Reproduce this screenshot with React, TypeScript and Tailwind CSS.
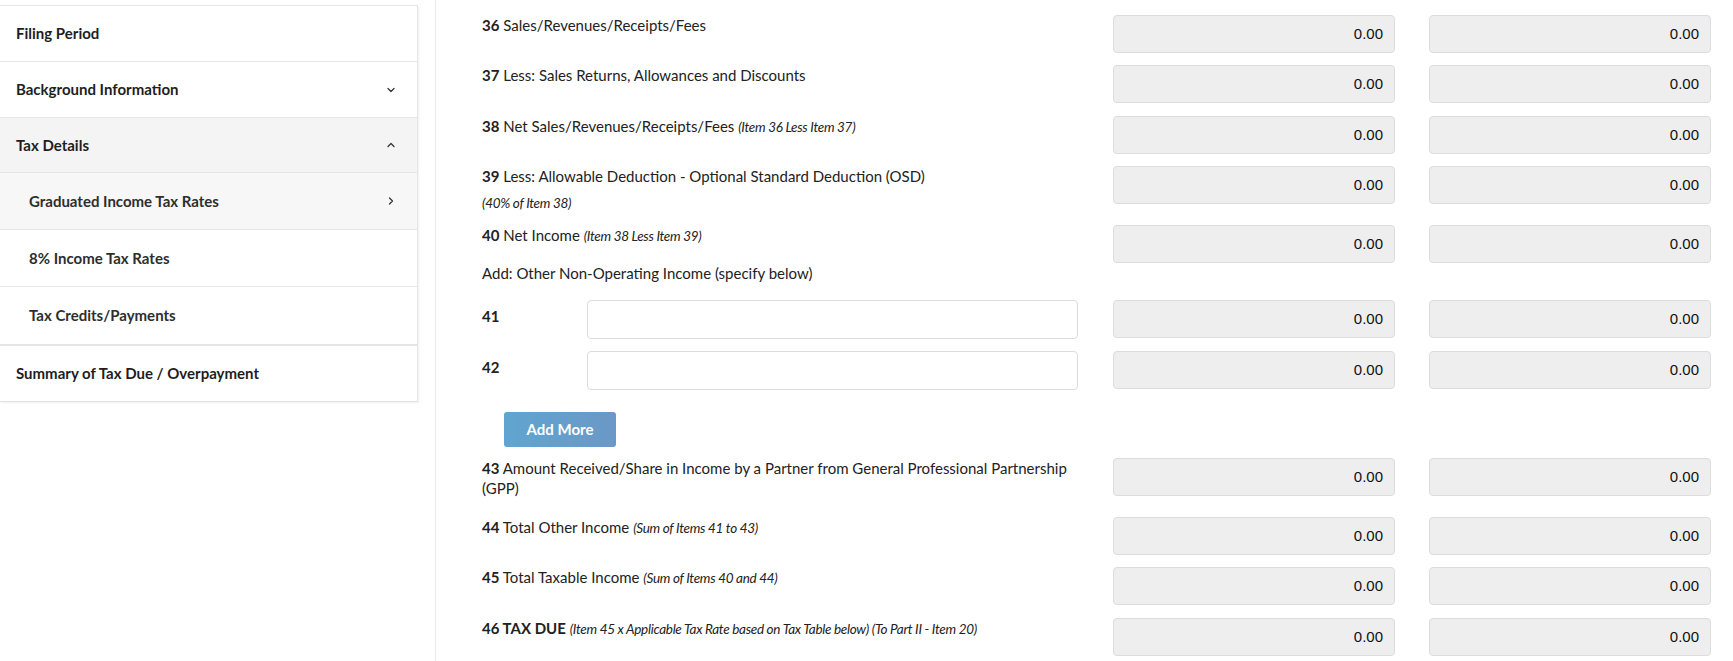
import { ChevronDown, ChevronUp, ChevronRight } from 'lucide-react';
import type { ReactNode } from 'react';

function Amount() {
  return (
    <div className="w-[282px] h-[38px] shrink-0 rounded-[4px] border border-[#dcdcdc] bg-[#eeeeee] flex items-center justify-end pr-[11px] text-[15px] text-[#111] font-['Liberation_Sans',sans-serif]">
      0.00
    </div>
  );
}

function Row({ className, label }: { className: string; label: ReactNode }) {
  return (
    <div className={`flex items-start ${className}`}>
      <div className="w-[596px] shrink-0 text-[15px] leading-[20px] text-[#222]">{label}</div>
      <div className="ml-[35px] flex">
        <Amount />
      </div>
      <div className="ml-[34px] flex">
        <Amount />
      </div>
    </div>
  );
}

function Note({ children }: { children: ReactNode }) {
  return <span className="text-[13.5px] italic tracking-[-0.3px] text-[#222]">{children}</span>;
}

function InputRow({ className, num }: { className: string; num: string }) {
  return (
    <div className={`flex items-start ${className}`}>
      <div className="w-[596px] shrink-0 flex items-start">
        <span className="w-[105px] pt-[6px] text-[15px] leading-[20px] font-bold text-[#222]">{num}</span>
        <input className="w-[491px] h-[39px] rounded-[4px] border border-[#dcdcdc] bg-white outline-none px-3" />
      </div>
      <div className="ml-[35px] flex">
        <Amount />
      </div>
      <div className="ml-[34px] flex">
        <Amount />
      </div>
    </div>
  );
}

const navTop = [
  { name: 'Filing Period', icon: null, h: 'h-[56px]', bg: 'bg-white' },
  { name: 'Background Information', icon: 'down', h: 'h-[56px]', bg: 'bg-white' },
  { name: 'Tax Details', icon: 'up', h: 'h-[55px]', bg: 'bg-[#f4f4f4]' },
];

const navSub = [
  { name: 'Graduated Income Tax Rates', active: true },
  { name: '8% Income Tax Rates', active: false },
  { name: 'Tax Credits/Payments', active: false },
];

export default function App() {
  return (
    <div className="flex min-h-screen bg-white font-['Lato',sans-serif]">
      <aside className="w-[418px] shrink-0 pt-[5px]">
        <div className="border-t border-r border-[#e6e6e6] shadow-[1px_1px_2px_rgba(0,0,0,0.06)]">
          {navTop.map((item) => (
            <div
              key={item.name}
              className={`${item.h} ${item.bg} border-b border-[#e6e6e6] flex items-center justify-between pl-4 pr-[20px]`}
            >
              <span className="text-[15px] font-bold text-[#1e1e1e]">{item.name}</span>
              {item.icon === 'down' && <ChevronDown size={12} strokeWidth={2.5} className="text-[#333]" />}
              {item.icon === 'up' && <ChevronUp size={12} strokeWidth={2.5} className="text-[#333]" />}
            </div>
          ))}
          <div className="border-b-2 border-[#e4e4e4]">
            {navSub.map((item, i) => (
              <div
                key={item.name}
                className={`h-[57px] flex items-center justify-between pl-[29px] pr-[20px] ${
                  item.active ? 'bg-[#f7f7f7]' : 'bg-white'
                } ${i < navSub.length - 1 ? 'border-b border-[#e6e6e6]' : ''}`}
              >
                <span className="text-[15px] font-bold text-[#2e2e2e]">{item.name}</span>
                {item.active && <ChevronRight size={12} strokeWidth={2.5} className="text-[#333]" />}
              </div>
            ))}
          </div>
          <div className="h-[56px] border-b border-[#e2e2e2] flex items-center pl-4">
            <span className="text-[15px] font-bold text-[#1e1e1e]">Summary of Tax Due / Overpayment</span>
          </div>
        </div>
      </aside>

      <main className="ml-[17px] flex-1 border-l border-[#ececec] pl-[46px] pr-[22px]">
        <Row className="mt-[15px]" label={<><b>36</b> Sales/Revenues/Receipts/Fees</>} />
        <Row className="mt-[12px]" label={<><b>37</b> Less: Sales Returns, Allowances and Discounts</>} />
        <Row
          className="mt-[13px]"
          label={<><b>38</b> Net Sales/Revenues/Receipts/Fees <Note>(Item 36 Less Item 37)</Note></>}
        />
        <Row
          className="mt-[12px]"
          label={
            <>
              <div><b>39</b> Less: Allowable Deduction - Optional Standard Deduction (OSD)</div>
              <div className="mt-[6px]"><Note>(40% of Item 38)</Note></div>
            </>
          }
        />
        <Row className="mt-[12px]" label={<><b>40</b> Net Income <Note>(Item 38 Less Item 39)</Note></>} />
        <div className="text-[15px] leading-[20px] text-[#222]">Add: Other Non-Operating Income (specify below)</div>

        <InputRow className="mt-[17px]" num="41" />
        <InputRow className="mt-[12px]" num="42" />

        <div className="mt-[22px] ml-[22px]">
          <button className="w-[112px] h-[35px] rounded-[3px] bg-gradient-to-r from-[#5fa5d0] to-[#6b98c7] text-white text-[15px] font-bold">
            Add More
          </button>
        </div>

        <Row
          className="mt-[11px]"
          label={<><b>43</b> Amount Received/Share in Income by a Partner from General Professional Partnership (GPP)</>}
        />
        <Row className="mt-[19px]" label={<><b>44</b> Total Other Income <Note>(Sum of Items 41 to 43)</Note></>} />
        <Row className="mt-[12px]" label={<><b>45</b> Total Taxable Income <Note>(Sum of Items 40 and 44)</Note></>} />
        <Row
          className="mt-[13px]"
          label={
            <>
              <b>46 TAX DUE</b>{' '}
              <Note>(Item 45 x Applicable Tax Rate based on Tax Table below) (To Part II - Item 20)</Note>
            </>
          }
        />
      </main>
    </div>
  );
}
